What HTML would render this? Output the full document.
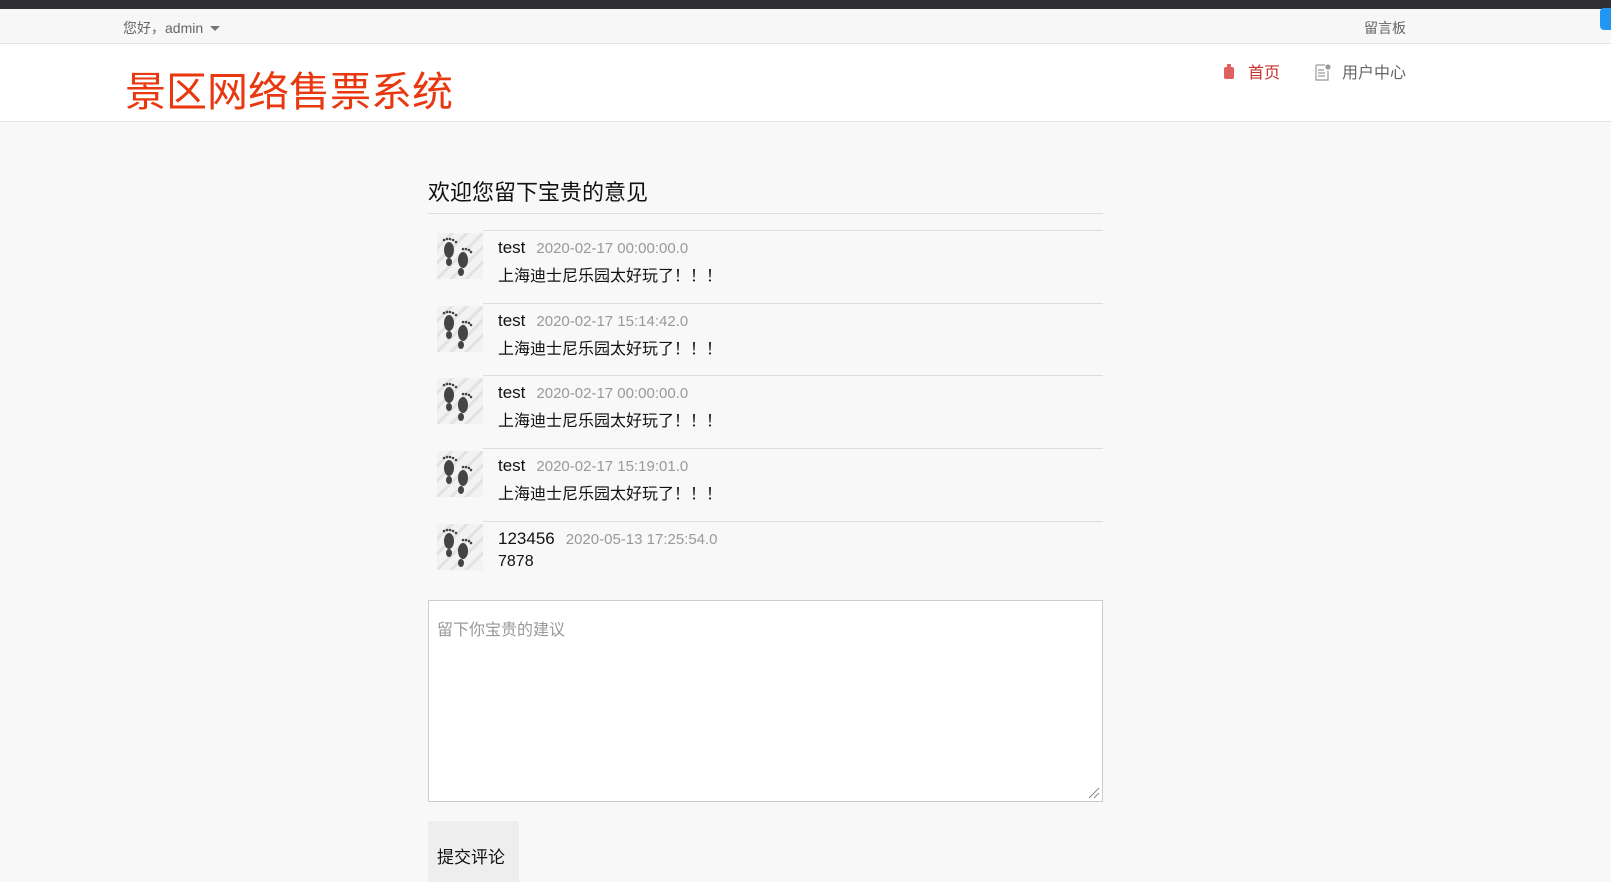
<!DOCTYPE html>
<html><head><meta charset="utf-8"><style>
*{margin:0;padding:0;box-sizing:border-box}
body{width:1611px;height:882px;overflow:hidden;background:#f8f8f8;font-family:"Liberation Sans","Noto Sans CJK SC",sans-serif;position:relative;color:#000}
.a{position:absolute;white-space:nowrap}
.row{position:absolute;left:483px;width:620px;height:73px;border-top:1px solid #ddd}
.av{position:absolute;left:-46px;top:2px;width:46px;height:46px}
.nm{position:absolute;left:15px;top:7px;font-size:17px;color:#111}
.nm span{font-size:15px;color:#999;margin-left:11px}
.tx{position:absolute;left:15px;top:31px;font-size:16px;color:#111}
</style></head><body>
<div class="a" style="left:0;top:0;width:1611px;height:9px;background:#303035"></div>
<div class="a" style="left:0;top:9px;width:1611px;height:35px;background:#f7f7f7;border-bottom:1px solid #e4e4e4"></div>
<div class="a" style="left:1600px;top:8px;width:11px;height:22px;background:#2196f3;border-radius:4px 0 0 4px"></div>
<div class="a" style="left:123px;top:18px;font-size:14px;color:#666">您好，admin <span style="display:inline-block;border:5px solid transparent;border-top-color:#777;vertical-align:-3px;margin-left:3px"></span></div>
<div class="a" style="left:1364px;top:18px;font-size:14px;color:#666">留言板</div>
<div class="a" style="left:0;top:44px;width:1611px;height:78px;background:#fff;border-bottom:1px solid #e4e4e4"></div>
<div class="a" style="left:125px;top:58px;font-size:41px;color:#e9380f;letter-spacing:0px">景区网络售票系统</div>
<svg class="a" style="left:1224px;top:64px" width="10" height="16"><rect x="3" y="0" width="4" height="3" fill="#e06060"/><rect x="0" y="3" width="10" height="12" rx="2" fill="#e06060"/></svg>
<div class="a" style="left:1248px;top:59px;font-size:16px;color:#c9302c">首页</div>
<svg class="a" style="left:1315px;top:64px" width="16" height="17" fill="none" stroke="#999" stroke-width="1.2"><path d="M1 1h9M1 1v15h12V7M3 6h6M3 9h7M3 12h7"/><circle cx="13" cy="3" r="2" fill="#999"/></svg>
<div class="a" style="left:1342px;top:59px;font-size:16px;color:#666">用户中心</div>
<div class="a" style="left:428px;top:175px;font-size:22px;color:#111">欢迎您留下宝贵的意见</div>
<div class="a" style="left:428px;top:213px;width:675px;height:1px;background:#ddd"></div>

<svg width="0" height="0" style="position:absolute"><defs><g id="ft"><rect width="46" height="46" fill="#f2f2f2"/><g stroke="#e2e2e2" stroke-width="3"><path d="M-5 20L20-5M-5 35L35-5M0 46L46 0M10 50L50 10M25 50L50 25"/></g><ellipse cx="12" cy="17" rx="5" ry="8" fill="#444"/><ellipse cx="12" cy="29" rx="3" ry="4" fill="#444"/><ellipse cx="26" cy="27" rx="5" ry="8" fill="#444"/><ellipse cx="24" cy="39" rx="3" ry="4" fill="#444"/><g fill="#444"><circle cx="7" cy="7" r="1.3"/><circle cx="10" cy="6" r="1.3"/><circle cx="13" cy="6" r="1.3"/><circle cx="16" cy="7" r="1.3"/><circle cx="19" cy="9" r="1.3"/><circle cx="26" cy="16" r="1.3"/><circle cx="29" cy="16" r="1.3"/><circle cx="32" cy="17" r="1.3"/><circle cx="34" cy="19" r="1.3"/></g></g></defs></svg>

<div class="row" style="top:230px"><svg class="av"><use href="#ft"/></svg><div class="nm">test<span>2020-02-17 00:00:00.0</span></div><div class="tx">上海迪士尼乐园太好玩了！！！</div></div>
<div class="row" style="top:303px"><svg class="av"><use href="#ft"/></svg><div class="nm">test<span>2020-02-17 15:14:42.0</span></div><div class="tx">上海迪士尼乐园太好玩了！！！</div></div>
<div class="row" style="top:375px"><svg class="av"><use href="#ft"/></svg><div class="nm">test<span>2020-02-17 00:00:00.0</span></div><div class="tx">上海迪士尼乐园太好玩了！！！</div></div>
<div class="row" style="top:448px"><svg class="av"><use href="#ft"/></svg><div class="nm">test<span>2020-02-17 15:19:01.0</span></div><div class="tx">上海迪士尼乐园太好玩了！！！</div></div>
<div class="row" style="top:521px"><svg class="av"><use href="#ft"/></svg><div class="nm">123456<span>2020-05-13 17:25:54.0</span></div><div class="tx">7878</div></div>

<div class="a" style="left:428px;top:600px;width:675px;height:202px;background:#fff;border:1px solid #ccc"></div>
<div class="a" style="left:437px;top:616px;font-size:16px;color:#999">留下你宝贵的建议</div>
<svg class="a" style="left:1088px;top:787px" width="12" height="12" stroke="#888"><path d="M1 11L11 1M6 11L11 6"/></svg>
<div class="a" style="left:428px;top:821px;width:91px;height:61px;background:#eee"></div>
<div class="a" style="left:437px;top:843px;font-size:17px;color:#111">提交评论</div>
</body></html>
